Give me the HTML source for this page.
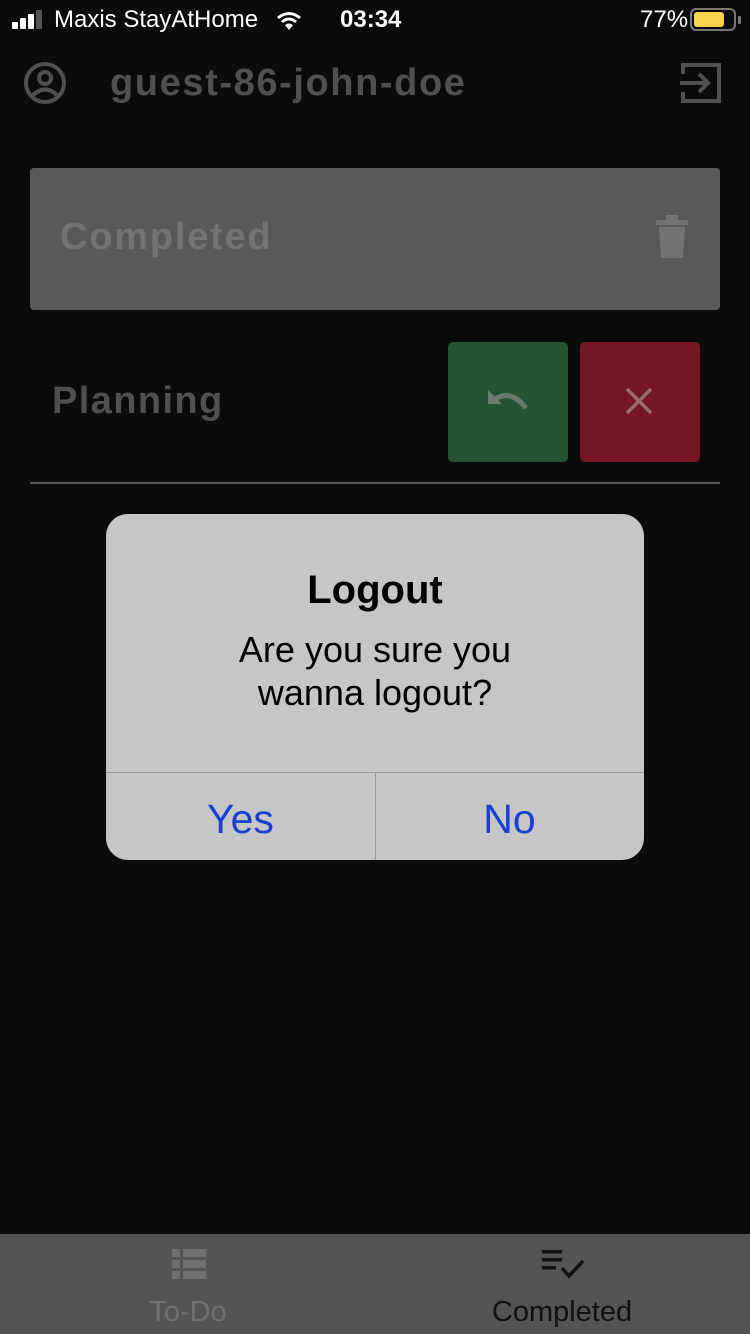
<!DOCTYPE html>
<html><head><meta charset="utf-8"><style>
*{margin:0;padding:0;box-sizing:border-box}
body{width:750px;height:1334px;background:#0b0b0b;position:relative;overflow:hidden;font-family:"Liberation Sans",sans-serif}
.a{position:absolute}
</style></head><body>
<div class="a" style="left:12px;top:22px;width:6px;height:7px;background:#fff;border-radius:1px"></div>
<div class="a" style="left:20px;top:18px;width:6px;height:11px;background:#fff;border-radius:1px"></div>
<div class="a" style="left:28px;top:14px;width:6px;height:15px;background:#fff;border-radius:1px"></div>
<div class="a" style="left:36px;top:10px;width:6px;height:19px;background:#555;border-radius:1px"></div>
<div class="a" style="left:54px;top:6px;color:#fff;font-size:24px">Maxis StayAtHome</div>
<svg class="a" style="left:274px;top:8px" width="30" height="24" viewBox="0 0 30 24"><path d="M15 22 L11 17 Q15 14 19 17Z M7 13 Q15 6 23 13 L21 15 Q15 10 9 15Z M3 9 Q15 -1 27 9 L25 11 Q15 3 5 11Z" fill="#fff"/></svg>
<div class="a" style="left:340px;top:6px;color:#fff;font-size:24px;font-weight:bold">03:34</div>
<div class="a" style="left:640px;top:6px;color:#fff;font-size:24px">77%</div>
<div class="a" style="left:690px;top:8px;width:46px;height:23px;border:2px solid #777;border-radius:6px"></div>
<div class="a" style="left:694px;top:12px;width:30px;height:15px;background:#f5d34a;border-radius:3px"></div>
<div class="a" style="left:738px;top:16px;width:3px;height:8px;background:#777;border-radius:1px"></div>
<svg class="a" style="left:22px;top:60px" width="46" height="46" viewBox="0 0 46 46"><circle cx="23" cy="23" r="19" fill="none" stroke="#505050" stroke-width="4"/><circle cx="23" cy="18" r="6" fill="none" stroke="#505050" stroke-width="4"/><path d="M11 35 Q23 24 35 35" fill="none" stroke="#505050" stroke-width="4"/></svg>
<div class="a" style="left:110px;top:62px;color:#505050;font-size:38px;font-weight:bold;letter-spacing:1.6px">guest-86-john-doe</div>
<svg class="a" style="left:678px;top:60px" width="46" height="46" viewBox="0 0 46 46"><path d="M5 14 V5 H41 V41 H5 V32" fill="none" stroke="#505050" stroke-width="4"/><path d="M2 23 H30 M21 14 L30 23 L21 32" fill="none" stroke="#505050" stroke-width="4"/></svg>
<div class="a" style="left:30px;top:168px;width:690px;height:142px;background:#595959;border-radius:4px"></div>
<div class="a" style="left:60px;top:216px;color:#737373;font-size:38px;font-weight:bold;letter-spacing:1.8px">Completed</div>
<svg class="a" style="left:654px;top:214px" width="36" height="46" viewBox="0 0 36 46"><rect x="2" y="6" width="32" height="5" fill="#737373"/><rect x="12" y="1" width="12" height="6" fill="#737373"/><path d="M5 13 H31 L29 44 H7Z" fill="#737373"/></svg>
<div class="a" style="left:52px;top:380px;color:#505050;font-size:38px;font-weight:bold;letter-spacing:1.4px">Planning</div>
<div class="a" style="left:448px;top:342px;width:120px;height:120px;background:#255433;border-radius:5px"></div>
<svg class="a" style="left:484px;top:386px" width="48" height="32" viewBox="0 0 48 32"><path d="M4 4 V18 H18Z" fill="#6a7a6e"/><path d="M10 14 Q26 2 42 22" fill="none" stroke="#6a7a6e" stroke-width="5"/></svg>
<div class="a" style="left:580px;top:342px;width:120px;height:120px;background:#741624;border-radius:5px"></div>
<svg class="a" style="left:624px;top:386px" width="30" height="30" viewBox="0 0 30 30"><path d="M3 3 L27 27 M27 3 L3 27" stroke="#9a6a70" stroke-width="3.5"/></svg>
<div class="a" style="left:30px;top:482px;width:690px;height:2px;background:#555"></div>
<div class="a" style="left:106px;top:514px;width:538px;height:346px;background:#c6c6c6;border-radius:22px;overflow:hidden">
<div class="a" style="left:0;top:54px;width:538px;text-align:center;font-size:40px;font-weight:bold;color:#000">Logout</div>
<div class="a" style="left:0;top:114px;width:538px;text-align:center;font-size:36px;line-height:43px;color:#000">Are you sure you<br>wanna logout?</div>
<div class="a" style="left:0;top:258px;width:538px;height:1px;background:#999"></div>
<div class="a" style="left:269px;top:258px;width:1px;height:88px;background:#999"></div>
<div class="a" style="left:0;top:282px;width:269px;text-align:center;font-size:41px;color:#1a3fd4">Yes</div>
<div class="a" style="left:269px;top:282px;width:269px;text-align:center;font-size:41px;color:#1a3fd4">No</div>
</div>
<div class="a" style="left:0;top:1234px;width:750px;height:100px;background:#545454"></div>
<svg class="a" style="left:172px;top:1249px" width="34" height="30" viewBox="0 0 34 30"><g fill="#707070"><rect x="0" y="0" width="8" height="8"/><rect x="11" y="0" width="23" height="8"/><rect x="0" y="11" width="8" height="8"/><rect x="11" y="11" width="23" height="8"/><rect x="0" y="22" width="8" height="8"/><rect x="11" y="22" width="23" height="8"/></g></svg>
<div class="a" style="left:100px;top:1296px;width:176px;text-align:center;font-size:29px;color:#707070">To-Do</div>
<svg class="a" style="left:542px;top:1250px" width="44" height="32" viewBox="0 0 44 32"><g fill="#111"><rect x="0" y="0" width="20" height="3.5"/><rect x="0" y="8" width="20" height="3.5"/><rect x="0" y="16" width="14" height="3.5"/></g><path d="M20 18 L27 26 L41 11" fill="none" stroke="#111" stroke-width="3.5"/></svg>
<div class="a" style="left:462px;top:1296px;width:200px;text-align:center;font-size:29px;color:#111">Completed</div>
</body></html>
